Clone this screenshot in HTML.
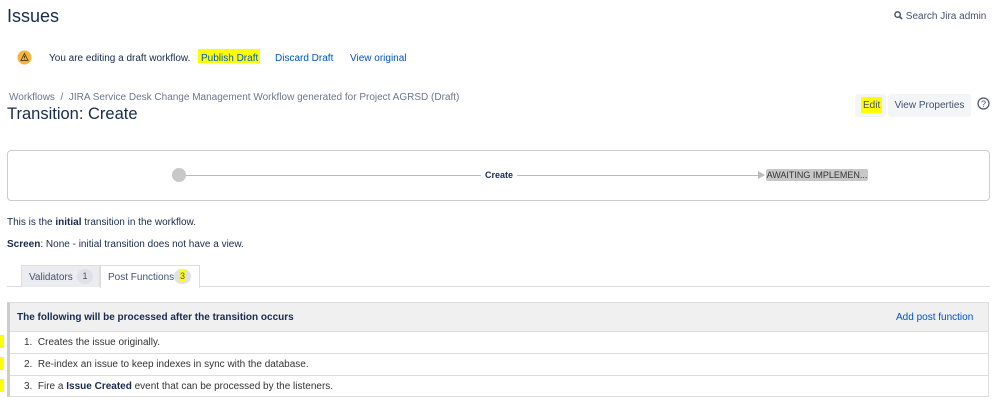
<!DOCTYPE html>
<html><head><style>
body{margin:0;width:998px;height:407px;background:#fff;font-family:"Liberation Sans",sans-serif;color:#172b4d;font-size:10px;position:relative;overflow:hidden}
.a{position:absolute;white-space:nowrap}
.lnk{color:#0052cc}
.hl{background:#ffff00}
</style></head><body>
<div class="a" style="left:7px;top:6px;font-size:18px">Issues</div>
<div class="a" style="left:894px;top:11px;font-size:10px;color:#42526e">
<svg width="9" height="9" viewBox="0 0 10 10" style="vertical-align:-1px"><circle cx="4" cy="4" r="3" fill="none" stroke="#42526e" stroke-width="1.6"/><path d="M6 6L9 9" stroke="#42526e" stroke-width="1.8"/></svg> Search Jira admin</div>
<svg class="a" style="left:17px;top:50px" width="15" height="15" viewBox="0 0 15 15"><circle cx="7.5" cy="7.5" r="7" fill="#f5b53b"/><path d="M7.5 3.5L11 10.5H4Z" fill="none" stroke="#5a4a1a" stroke-width="1"/><path d="M7.5 6v2.4M7.5 9.2v.6" stroke="#5a4a1a" stroke-width="1"/></svg>
<div class="a" style="left:49px;top:53px">You are editing a draft workflow.</div>
<div class="a hl" style="left:198px;top:49px;height:14px;width:62px"></div>
<div class="a lnk" style="left:201px;top:53px">Publish Draft</div>
<div class="a lnk" style="left:275px;top:53px">Discard Draft</div>
<div class="a lnk" style="left:350px;top:53px">View original</div>
<div class="a" style="left:9px;top:92px;color:#6b778c">Workflows &nbsp;/ &nbsp;JIRA Service Desk Change Management Workflow generated for Project AGRSD (Draft)</div>
<div class="a" style="left:7px;top:105px;font-size:16.5px">Transition: Create</div>
<div class="a" style="left:855px;top:94px;width:31px;height:23px;background:#f4f5f7;border-radius:3px"></div>
<div class="a hl" style="left:861px;top:97px;width:21px;height:16px"></div>
<div class="a" style="left:863px;top:100px;color:#42526e">Edit</div>
<div class="a" style="left:888px;top:94px;width:83px;height:23px;background:#f4f5f7;border-radius:3px;color:#42526e;line-height:23px;text-align:center">View Properties</div>
<svg class="a" style="left:977px;top:97px" width="13" height="13"><circle cx="6.5" cy="6.5" r="5.5" fill="none" stroke="#42526e" stroke-width="1.2"/><text x="6.5" y="10" font-size="9" text-anchor="middle" fill="#42526e" font-family="Liberation Sans">?</text></svg>
<div class="a" style="left:7px;top:150px;width:981px;height:49px;border:1px solid #ccc;border-radius:4px"></div>
<div class="a" style="left:172px;top:168px;width:14px;height:14px;border-radius:50%;background:#c8c8c8"></div>
<div class="a" style="left:186px;top:175px;width:572px;height:1px;background:#bbb"></div>
<div class="a" style="left:758px;top:171px;width:0;height:0;border-left:7px solid #bbb;border-top:4px solid transparent;border-bottom:4px solid transparent"></div>
<div class="a" style="left:481px;top:170px;background:#fff;padding:0 4px;font-size:9px;font-weight:bold">Create</div>
<div class="a" style="left:766px;top:169px;width:102px;height:12px;background:#c8c8c8;border-radius:2px;font-size:9px;line-height:12px;text-align:center;color:#333">AWAITING IMPLEMEN...</div>
<div class="a" style="left:7px;top:217px">This is the <b>initial</b> transition in the workflow.</div>
<div class="a" style="left:7px;top:239px"><b>Screen</b>: None - initial transition does not have a view.</div>
<div class="a" style="left:7px;top:286px;width:983px;height:1px;background:#ddd"></div>
<div class="a" style="left:21px;top:265px;width:77px;height:21px;background:#ebecf0;border:1px solid #ddd;border-bottom:none;color:#42526e"><span style="position:absolute;left:7px;top:6px">Validators</span><span style="position:absolute;left:55px;top:3px;width:16px;height:15px;border-radius:8px;background:#dfe1e6;text-align:center;line-height:15px;font-size:9px">1</span></div>
<div class="a" style="left:100px;top:265px;width:98px;height:22px;background:#fff;border:1px solid #ddd;border-bottom:none;color:#42526e"><span style="position:absolute;left:7px;top:6px">Post Functions</span><span style="position:absolute;left:73px;top:3px;width:17px;height:15px;border-radius:8px;background:#dfe1e6"></span><span style="position:absolute;left:79px;top:4px;width:5px;height:12px;background:#ffff00;font-size:9px;line-height:13px">3</span></div>
<div class="a" style="left:7px;top:302px;width:982px;height:95px;border:1px solid #ddd;border-left:3px solid #ccc;box-sizing:border-box"></div>
<div class="a" style="left:10px;top:303px;width:978px;height:28px;background:#f0f0f0;border-bottom:1px solid #ddd"></div>
<div class="a" style="left:17px;top:312px;font-weight:bold">The following will be processed after the transition occurs</div>
<div class="a lnk" style="left:896px;top:312px">Add post function</div>
<div class="a" style="left:10px;top:353px;width:978px;height:1px;background:#ddd"></div>
<div class="a" style="left:10px;top:375px;width:978px;height:1px;background:#ddd"></div>
<div class="a hl" style="left:0;top:335px;width:4px;height:13px"></div>
<div class="a hl" style="left:0;top:357px;width:4px;height:13px"></div>
<div class="a hl" style="left:0;top:379px;width:4px;height:13px"></div>
<div class="a" style="left:24px;top:337px;color:#333">1. &nbsp;Creates the issue originally.</div>
<div class="a" style="left:24px;top:359px;color:#333">2. &nbsp;Re-index an issue to keep indexes in sync with the database.</div>
<div class="a" style="left:24px;top:381px;color:#333">3. &nbsp;Fire a <b style="color:#172b4d">Issue Created</b> event that can be processed by the listeners.</div>
</body></html>
